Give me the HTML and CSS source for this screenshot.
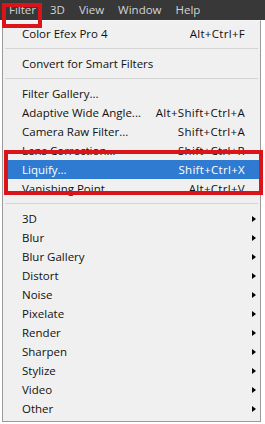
FILE: index.html
```html
<!DOCTYPE html>
<html>
<head>
<meta charset="utf-8">
<link rel="stylesheet" href="styles.css">
</head>
<body>
<div class="menubar">
  <span class="top-item">Filter</span>
  <span class="top-item">3D</span>
  <span class="top-item">View</span>
  <span class="top-item">Window</span>
  <span class="top-item">Help</span>
</div>
<div class="menu">
  <div class="row"><span>Color Efex Pro 4</span><span class="key">Alt+Ctrl+F</span></div>
  <div class="sep"></div>
  <div class="row"><span>Convert for Smart Filters</span></div>
  <div class="sep"></div>
  <div class="row"><span>Filter Gallery...</span></div>
  <div class="row"><span>Adaptive Wide Angle...</span><span class="key">Alt+Shift+Ctrl+A</span></div>
  <div class="row"><span>Camera Raw Filter...</span><span class="key">Shift+Ctrl+A</span></div>
  <div class="row"><span>Lens Correction...</span><span class="key">Shift+Ctrl+R</span></div>
  <div class="row active"><span>Liquify...</span><span class="key">Shift+Ctrl+X</span></div>
  <div class="row"><span>Vanishing Point...</span><span class="key">Alt+Ctrl+V</span></div>
  <div class="sep"></div>
  <div class="row"><span>3D</span><span class="key"></span><span class="arrow"></span></div>
  <div class="row"><span>Blur</span><span class="key"></span><span class="arrow"></span></div>
  <div class="row"><span>Blur Gallery</span><span class="key"></span><span class="arrow"></span></div>
  <div class="row"><span>Distort</span><span class="key"></span><span class="arrow"></span></div>
  <div class="row"><span>Noise</span><span class="key"></span><span class="arrow"></span></div>
  <div class="row"><span>Pixelate</span><span class="key"></span><span class="arrow"></span></div>
  <div class="row"><span>Render</span><span class="key"></span><span class="arrow"></span></div>
  <div class="row"><span>Sharpen</span><span class="key"></span><span class="arrow"></span></div>
  <div class="row"><span>Stylize</span><span class="key"></span><span class="arrow"></span></div>
  <div class="row"><span>Video</span><span class="key"></span><span class="arrow"></span></div>
  <div class="row"><span>Other</span><span class="key"></span><span class="arrow"></span></div>
</div>
<div class="mark mark-filter"></div>
<div class="mark mark-liquify"></div>
</body>
</html>
```

FILE: styles.css
```css
html, body {
  margin: 0;
  padding: 0;
  background: #ffffff;
  width: 265px;
  height: 424px;
  overflow: hidden;
  font-family: "Open Sans", "Noto Sans", sans-serif;
  position: relative;
}

.menubar {
  height: 20px;
  background: #383838;
  display: flex;
  align-items: center;
  gap: 14px;
  padding-left: 9px;
  font-size: 11.5px;
  color: #d4d4d4;
}

.top-item {
  line-height: 20px;
}

.menu {
  margin-left: 2px;
  width: 255px;
  background: #f0f0f0;
  border: 1px solid #9a9a9a;
  border-top: 1px solid #f6f6f6;
  padding: 3px 1px;
  font-size: 11.5px;
  color: #111111;
}

.row {
  display: grid;
  grid-template-columns: 1fr auto 14px;
  align-items: center;
  height: 19px;
  padding-left: 18px;
  white-space: nowrap;
}

.row.active {
  background: #2f7bd2;
  color: #ffffff;
}

.key {
  text-align: right;
  letter-spacing: 0.3px;
}

.arrow {
  width: 0;
  height: 0;
  margin-left: 7px;
  border-top: 3.5px solid transparent;
  border-bottom: 3.5px solid transparent;
  border-left: 4px solid #000000;
}

.sep {
  height: 1px;
  margin: 5px 1px;
  background: #d4d4d4;
}

.mark {
  position: absolute;
  border: 4px solid #d9151b;
  box-sizing: border-box;
}

.mark-filter {
  left: 2px;
  top: 3px;
  width: 40px;
  height: 25px;
}

.mark-liquify {
  left: 4px;
  top: 150px;
  width: 259px;
  height: 45px;
}
```
